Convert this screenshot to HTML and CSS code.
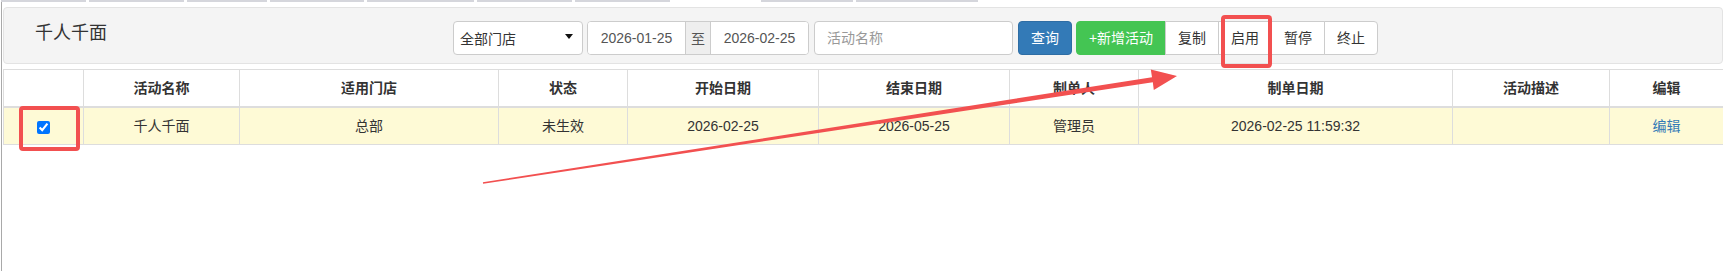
FILE: index.html
```html
<!DOCTYPE html>
<html lang="zh-CN">
<head>
    <meta charset="UTF-8">
    <meta name="viewport" content="width=device-width, initial-scale=1.0">
    <title>千人千面</title>
    <link rel="stylesheet" href="styles.css">
</head>
<body>
    <div class="page">
        <div class="tabs">
            <span class="tab" style="width:85px"></span>
            <span class="tab" style="width:95px"></span>
            <span class="tab" style="width:80px"></span>
            <span class="tab" style="width:94px"></span>
            <span class="tab" style="width:107px"></span>
            <span class="tab" style="width:95px"></span>
            <span class="tab" style="width:95px"></span>
            <span class="tab tab-active" style="width:85px"></span>
            <span class="tab" style="width:92px"></span>
            <span class="tab" style="width:122px"></span>
        </div>

        <div class="panel">
            <div class="panel-title">千人千面</div>
            <div class="toolbar">
                <div class="select">
                    <span>全部门店</span>
                    <i class="caret"></i>
                </div>
                <div class="date-group">
                    <input type="text" class="date-input" value="2026-01-25">
                    <span class="addon">至</span>
                    <input type="text" class="date-input" value="2026-02-25">
                </div>
                <input type="text" class="name-input" placeholder="活动名称">
                <button type="button" class="btn btn-primary">查询</button>
                <div class="btn-group">
                    <button type="button" class="btn btn-success">+新增活动</button>
                    <button type="button" class="btn btn-default">复制</button>
                    <button type="button" class="btn btn-default">启用</button>
                    <button type="button" class="btn btn-default">暂停</button>
                    <button type="button" class="btn btn-default">终止</button>
                </div>
            </div>
        </div>

        <table class="grid">
            <colgroup>
                <col style="width:80px">
                <col style="width:156px">
                <col style="width:259px">
                <col style="width:129px">
                <col style="width:191px">
                <col style="width:191px">
                <col style="width:129px">
                <col style="width:314px">
                <col style="width:157px">
                <col style="width:114px">
            </colgroup>
            <thead>
                <tr>
                    <th></th>
                    <th>活动名称</th>
                    <th>适用门店</th>
                    <th>状态</th>
                    <th>开始日期</th>
                    <th>结束日期</th>
                    <th>制单人</th>
                    <th>制单日期</th>
                    <th>活动描述</th>
                    <th>编辑</th>
                </tr>
            </thead>
            <tbody>
                <tr class="selected">
                    <td><input type="checkbox" class="row-check" checked></td>
                    <td>千人千面</td>
                    <td>总部</td>
                    <td>未生效</td>
                    <td>2026-02-25</td>
                    <td>2026-05-25</td>
                    <td>管理员</td>
                    <td>2026-02-25 11:59:32</td>
                    <td></td>
                    <td><a href="#" class="edit-link">编辑</a></td>
                </tr>
            </tbody>
        </table>
    </div>

    <!-- screenshot markup: boxes and arrow -->
    <svg class="marks" width="1723" height="271" viewBox="0 0 1723 271">
        <rect x="1223" y="17" width="47" height="49" rx="2" />
        <rect x="21" y="108" width="57" height="41" rx="2" />
        <polygon class="arrow" points="482.9,182.2 1152,77.3 1150.8,69.6 1177,76 1153.8,90 1152.8,82.3 483.1,183.8" />
    </svg>
</body>
</html>
```

FILE: styles.css
```css
body {
    font-family: "Liberation Sans", "Noto Sans CJK SC", sans-serif;
    font-size: 14px;
    color: #333;
    background-color: #fff;
    margin: 0;
    padding: 0;
    position: relative;
    height: 271px;
    overflow: hidden;
}

.page {
    margin-left: 1px;
    padding-left: 1px;
    border-left: 1px solid #a9a9a9;
    height: 271px;
}

.tabs {
    display: flex;
    gap: 3px;
    height: 2px;
    margin-left: -2px;
}

.tab {
    display: block;
    height: 2px;
    background-color: #d5d6dc;
}

.tab-active {
    background-color: transparent;
}

.panel {
    display: flex;
    align-items: flex-start;
    width: 1720px;
    height: 57px;
    margin-top: 5px;
    padding: 13px 0 0 31px;
    background-color: #f4f4f4;
    border: 1px solid #e3e3e3;
    border-radius: 4px;
    box-sizing: border-box;
}

.panel-title {
    width: 418px;
    font-size: 18px;
    line-height: 24px;
    color: #333;
}

.toolbar {
    display: flex;
    align-items: center;
}

.select {
    display: flex;
    align-items: center;
    justify-content: space-between;
    width: 130px;
    height: 34px;
    padding: 0 9px 0 6px;
    background-color: #fff;
    border: 1px solid #ccc;
    border-radius: 4px;
    box-sizing: border-box;
    color: #333;
}

.caret {
    width: 0;
    height: 0;
    margin-bottom: 3px;
    border-left: 4.5px solid transparent;
    border-right: 4.5px solid transparent;
    border-top: 5px solid #111;
}

.date-group {
    display: flex;
    margin-left: 4px;
    height: 34px;
    border: 1px solid #ccc;
    border-radius: 4px;
    box-sizing: border-box;
    background-color: #fff;
    overflow: hidden;
}

.date-input {
    width: 97px;
    padding: 0;
    border: none;
    outline: none;
    font-family: inherit;
    font-size: 14px;
    color: #555;
    text-align: center;
    background-color: #fff;
}

.addon {
    display: flex;
    align-items: center;
    justify-content: center;
    width: 24px;
    background-color: #eee;
    border-left: 1px solid #ccc;
    border-right: 1px solid #ccc;
    color: #555;
}

.name-input {
    width: 199px;
    height: 34px;
    margin-left: 5px;
    padding: 0 12px;
    border: 1px solid #ccc;
    border-radius: 4px;
    box-sizing: border-box;
    font-family: inherit;
    font-size: 14px;
    color: #555;
    outline: none;
}

.name-input::placeholder {
    color: #999;
}

.btn {
    height: 34px;
    padding: 0;
    font-family: inherit;
    font-size: 14px;
    line-height: 20px;
    white-space: nowrap;
    text-align: center;
    border: 1px solid transparent;
    border-radius: 4px;
    box-sizing: border-box;
    cursor: pointer;
}

.btn-primary {
    margin-left: 5px;
    width: 54px;
    color: #fff;
    background-color: #337ab7;
    border-color: #2e6da4;
}

.btn-group {
    display: flex;
    margin-left: 4px;
}

.btn-group .btn {
    border-radius: 0;
}

.btn-group .btn + .btn {
    margin-left: -1px;
}

.btn-group .btn:first-child {
    border-radius: 4px 0 0 4px;
}

.btn-group .btn:last-child {
    border-radius: 0 4px 4px 0;
}

.btn-success {
    width: 90px;
    color: #fff;
    background-color: #44c553;
    border-color: #44c553;
}

.btn-default {
    width: 54px;
    color: #333;
    background-color: #fff;
    border-color: #ccc;
}

.grid {
    width: 1720px;
    margin-top: 5px;
    table-layout: fixed;
    border-collapse: collapse;
    border: 1px solid #ddd;
}

.grid th,
.grid td {
    padding: 8px;
    line-height: 20px;
    text-align: center;
    border: 1px solid #ddd;
    font-size: 14px;
    white-space: nowrap;
}

.grid th {
    font-weight: bold;
    background-color: #fff;
    border-bottom-width: 2px;
}

.grid .selected td {
    background-color: #fefad6;
}

.row-check {
    width: 13px;
    height: 13px;
    margin: 0;
    vertical-align: middle;
    accent-color: #0075ff;
}

.edit-link {
    color: #337ab7;
    text-decoration: none;
}

.marks {
    position: absolute;
    top: 0;
    left: 0;
    pointer-events: none;
}

.marks rect {
    fill: none;
    stroke: #f25050;
    stroke-width: 4;
}

.marks .arrow {
    fill: #f25050;
}
```
